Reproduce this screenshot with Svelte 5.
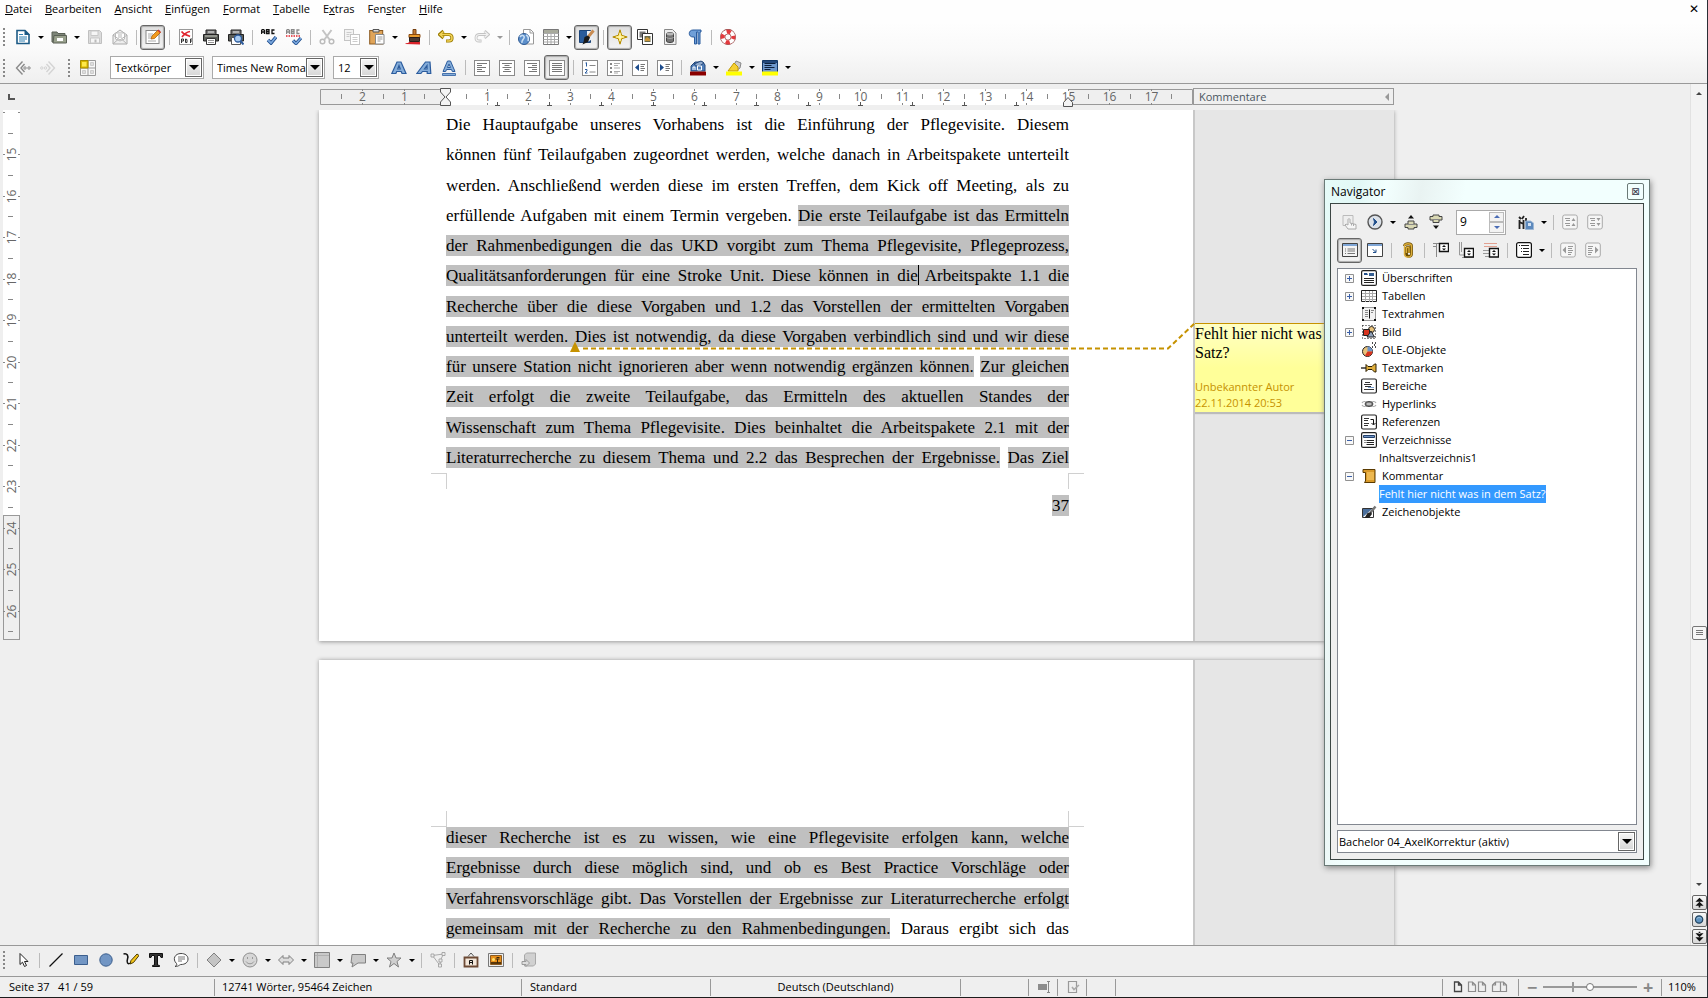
<script>
  const icons = {
    new: '<path d="M2 1.500h8l4 4v9H2z" fill="#fff" stroke="#1c5a85" stroke-width="1.600"/><path d="M9.500 1v5H15z" fill="#1c5a85"/><path d="M4 5.500h4M4 8h8M4 10h8M4 12h6" stroke="#2f7fb0"/>',
    open: '<path d="M1 3h5l1 1.500h7V13H1z" fill="#7d8578" stroke="#5a6055"/><path d="M3 6.500h12.500V14H2z" fill="#98a08c" stroke="#5a6055"/><path d="M6 9h6v3H6z" fill="#fff"/>',
    save: '<path d="M1.500 1.500h11l2 2v11h-13z" fill="#dcdcdc" stroke="#c0c0c0"/><path d="M4 2h7v4.500H4z" fill="#f6f6f6" stroke="#c8c8c8"/><path d="M3.500 9h9v5h-9z" fill="#f6f6f6" stroke="#c8c8c8"/><path d="M8.500 10.500v3" stroke="#bbb" stroke-width="2"/>',
    mail: '<path d="M1 6l7-5 7 5v9H1z" fill="#eee" stroke="#aaa"/><path d="M3.500 4h9v6l-4.500 2-4.500-2z" fill="#fff" stroke="#bbb"/><path d="M1 15l5.500-5M15 15l-5.500-5M1 6l7 5 7-5M6 6h4M6 8h4" fill="none" stroke="#b5b5b5"/>',
    edit: '<rect x="1" y="1.500" width="13" height="13" fill="#fff" stroke="#888"/><path d="M3 5h5M3 7h4M3 9h3M3 12h8" stroke="#aaa"/><path d="M6 10l1-3 6-6 2.500 2.500-6 6z" fill="#f29a1c" stroke="#a35400" stroke-width=".7"/><path d="M13 1l2.500 2.500" stroke="#c33" stroke-width="1.500"/>',
    pdf: '<rect x="1.500" y=".5" width="13" height="15" fill="#fff" stroke="#999"/><path d="M3.500 2.500c3 4 5 3 8.500 5M12 2.500C9 3 6 5 4 8" stroke="#e0242e" stroke-width="1.700" fill="none"/><path d="M3.500 14v-4h2v2h-2M7.500 10v3.500h1.500v-3zM12.500 14v-4h1.500M12 12h2" stroke="#333" fill="none"/>',
    print: '<path d="M3 1h10v5H3z" fill="#777" stroke="#222"/><path d="M5 3h6" stroke="#eee"/><path d="M.5 5.500h15V12H.5z" fill="#5c5f5a" stroke="#222"/><path d="M2 7h12" stroke="#c8cbc0"/><path d="M3.500 9.500h9v6h-9z" fill="#fff" stroke="#333"/><path d="M5 11.500h6M5 13.500h6" stroke="#999"/>',
    preview: '<path d="M3 1h10v5H3z" fill="#777" stroke="#222"/><path d="M5 3h6" stroke="#eee"/><path d="M.5 5.500h15V12H.5z" fill="#5c5f5a" stroke="#222"/><path d="M3.500 8.500h9v7h-9z" fill="#fff" stroke="#555"/><circle cx="10" cy="9.500" r="3.500" fill="#a9cbf0" stroke="#2d5b9c" stroke-width="1.300"/><path d="M12.500 12l3 3.500" stroke="#2d5b9c" stroke-width="2"/>',
    spell: '<path d="M.5 5V1.500l1-1h1l1 1V5M.5 3h3M5.500.5v4h2.500v-4zM5.500 2.500H8M13.500 1h-2.500v3.500h2.500" stroke="#111" fill="none" stroke-width="1.300"/><path d="M7 11l3 3 5-6" fill="none" stroke="#1d4c8c" stroke-width="3.500"/><path d="M7 11l3 3 5-6" fill="none" stroke="#7aa7dd" stroke-width="1.800"/>',
    autospell: '<path d="M.5 5V1.500l1-1h1l1 1V5M.5 3h3M5.500.5v4h2.500v-4zM5.500 2.500H8M13.500 1h-2.500v3.500h2.500" stroke="#888" fill="none" stroke-width="1.300"/><path d="M0 7h14" stroke="#e0242e" stroke-width="1.500" stroke-dasharray="1.500 1"/><path d="M7 11.500l3 3 5-5.500" fill="none" stroke="#1d4c8c" stroke-width="3.300"/><path d="M7 11.500l3 3 5-5.500" fill="none" stroke="#7aa7dd" stroke-width="1.600"/>',
    cut: '<path d="M3.500 1l7 9.500M12.500 1l-7 9.500" stroke="#c4c4c4" stroke-width="2"/><circle cx="3.500" cy="12.500" r="2.300" fill="none" stroke="#bbb" stroke-width="1.500"/><circle cx="12.500" cy="12.500" r="2.300" fill="none" stroke="#bbb" stroke-width="1.500"/>',
    copy: '<rect x=".5" y=".5" width="9" height="11" fill="#f3f3f3" stroke="#c4c4c4"/><path d="M2.500 3.500h5M2.500 5.500h3M2.500 7.500h3" stroke="#ccc"/><rect x="6.500" y="5.500" width="9" height="10" fill="#fff" stroke="#c4c4c4"/><path d="M8.500 8.500h5M8.500 10.500h5M8.500 12.500h5" stroke="#ccc"/>',
    paste: '<rect x=".7" y="1.500" width="13" height="13.500" fill="#e0a458" stroke="#8a5a20"/><path d="M4 3h6V.5H4z" fill="#ddd" stroke="#555"/><path d="M6.500 5.500H15V15H6.500z" fill="#fff" stroke="#888"/><path d="M8.500 8h5M8.500 10h5M8.500 12h3" stroke="#999"/>',
    brush: '<path d="M8 .5h3v5H8z" fill="#c57a34" stroke="#774010"/><path d="M4 5.500h11v3H4z" fill="#eb9b2c" stroke="#8a4a10"/><path d="M4.500 8.500h10v4h-10z" fill="#4a3a33" stroke="#2b1d18"/><path d="M0 15c2-2 3 0 4-2h11v2.500z" fill="#d9232b"/>',
    undo: '<path d="M5.500 2L1.500 5.500l4 3.500M2 5.500h9c4 .5 4 6.500 0 6.500H8" fill="none" stroke="#9a7b00" stroke-width="3.200"/><path d="M5.500 2.500L2 5.500l3.500 3M2 5.500h9c4 .5 4 6.500 0 6.500H8.500" fill="none" stroke="#f2d358" stroke-width="1.500"/>',
    redo: '<path d="M10.500 2l4 3.500-4 3.500M14 5.500H5c-4 .5-4 6.500 0 6.500h2.500" fill="none" stroke="#c4c4c4" stroke-width="2.800"/><path d="M10.500 2.500l3.500 3-3.500 3M14 5.500H5c-4 .5-4 6.500 0 6.500h2" fill="none" stroke="#f2f2f2" stroke-width="1.200"/>',
    web: '<path d="M5.500.5h7l3 3V15h-10z" fill="#fff" stroke="#999"/><path d="M12 .5v3.500h3.500" fill="none" stroke="#999"/><circle cx="6" cy="10" r="5.500" fill="#5c8fcb" stroke="#2f5a92"/><path d="M2 8c2-3 5-1 4 1s-3 3-2 5M8 6c2 1 3 3 2 6" stroke="#c9dff4" fill="none" stroke-width="1.600"/>',
    table: '<path d="M.5.500h15v15H.5z" fill="#fff" stroke="#777"/><path d="M1 1h14v3H1z" fill="#a8aa9c"/><path d="M.5 4.500h15M.5 7.500h15M.5 10.500h15M.5 13h15M4.500 4v11M8 4v11M11.500 4v11" stroke="#aaa"/>',
    draw: '<path d="M.5 1.500h11v12H.5z" fill="#2a5c9c" stroke="#1c4478"/><path d="M8 2h6v8L8 13z" fill="#e9eef5"/><path d="M14.500 1.500l-5 6" stroke="#c98c52" stroke-width="3"/><path d="M4.500 13l1-5 3.500-1.500 2 2-2 4.500-5.500 2.500z" fill="#1b1b1b"/>',
    star: '<path d="M8 .8l1.700 5.500L15.200 8l-5.500 1.700L8 15.200 6.300 9.700.8 8l5.500-1.700z" fill="#ffe452" stroke="#b28a00"/><path d="M8 4v8M4 8h8" stroke="#fffbd0"/>',
    gallery: '<path d="M.5.500h10v10H.5z" fill="#fff" stroke="#333"/><path d="M2.500 2.500h6v6h-6z" fill="#777"/><path d="M5.500 4.500h10v11h-10z" fill="#fff" stroke="#333"/><path d="M7.500 7h6v6h-6z" fill="#6b6a4a"/><path d="M8 10l2-2 3 2v2H8z" fill="#c8963a"/>',
    db: '<path d="M2.500.500h8l3.500 3.500v11.500H2.500z" fill="#eee" stroke="#888"/><path d="M4.500 5c0-2 7-2 7 0v7c0 2-7 2-7 0z" fill="#757575" stroke="#444"/><ellipse cx="8" cy="5" rx="3.500" ry="1.400" fill="#b8b8b8"/><path d="M4.500 8c0 2 7 2 7 0" stroke="#aaa" fill="none"/>',
    pilcrow: '<path d="M14 1H6C1 1 1 8 6 8h1.500v7h2V3h1.500v12h2V3h1z" fill="#6f9fd8" stroke="#2b5c9e"/>',
    help: '<circle cx="8" cy="8" r="5.300" fill="none" stroke="#8a2a2a" stroke-width="5.200"/><circle cx="8" cy="8" r="5.300" fill="none" stroke="#fff" stroke-width="4"/><circle cx="8" cy="8" r="5.300" fill="none" stroke="#e2393d" stroke-width="4" stroke-dasharray="4.160" stroke-dashoffset="2"/>',
    back: '<path d="M7.500 1.500L1.500 8l6 6.500M9.500 4L6 8l3.500 4" fill="none" stroke="#8a8a8a" stroke-width="1.400"/><circle cx="10" cy="8" r="1.200" fill="none" stroke="#888"/><circle cx="14" cy="8" r="1.200" fill="none" stroke="#888"/>',
    fwd: '<path d="M8.500 1.500l6 6.500-6 6.500M6.500 4L10 8l-3.500 4" fill="none" stroke="#d4d4d4" stroke-width="1.400"/><circle cx="5.500" cy="8" r="1.200" fill="none" stroke="#d4d4d4"/><circle cx="1.800" cy="8" r="1.200" fill="none" stroke="#d4d4d4"/>',
    styles: '<path d="M.5.500h15v15H.5z" fill="#f8f8f8" stroke="#999"/><path d="M2.500 10.500h3v3h-3zM10.500 2.500h3v3h-3zM10.500 10.500h3v3h-3z" fill="#ddd" stroke="#ccc"/><path d="M8 1v14M1 8h14" stroke="#999"/><path d="M.5.500H8V8H.5z" fill="#d9b800" stroke="#a98d00"/><path d="M2 2h4.500v4.500H2z" fill="#ffe94a"/>',
    bold: '<path d="M.8 13.500L6 2h4l5 11.500h-4l-.8-2H5.700l-.8 2zM6.700 9h2.600L8 5.500z" fill="#85add9" stroke="#2b5c9e" stroke-width="1.200"/>',
    italic: '<path d="M.8 13.500L9.500 2H14l.8 11.500h-3.600v-2H6.500l-1.600 2zM8.500 9h2.600l-.1-3.500z" fill="#85add9" stroke="#2b5c9e" stroke-width="1.200"/>',
    under: '<path d="M2 11.500L6.500 1h3L14 11.500h-2.700l-.8-2h-5l-.8 2zM6.500 7.500h3L8 4z" fill="#85add9" stroke="#2b5c9e"/><path d="M1.500 13.500h13v2h-13z" fill="#85add9" stroke="#2b5c9e" stroke-width=".8"/>',
    left: '<rect x=".5" y=".5" width="15" height="15" fill="#fff" stroke="#8a8a8a"/><path d="M3 3.500h10M3 5.500h5M3 7.500h9M3 9.500h5M3 11.500h8" stroke="#777"/>',
    center: '<rect x=".5" y=".5" width="15" height="15" fill="#fff" stroke="#8a8a8a"/><path d="M3 3.500h10M5.500 5.500h5M3.500 7.500h9M5.500 9.500h5M4 11.500h8" stroke="#777"/>',
    right: '<rect x=".5" y=".5" width="15" height="15" fill="#fff" stroke="#8a8a8a"/><path d="M3 3.500h10M8 5.500h5M4 7.500h9M8 9.500h5M5 11.500h8" stroke="#777"/>',
    justify: '<rect x=".5" y=".5" width="15" height="15" fill="#fff" stroke="#8a8a8a"/><path d="M3 3.500h10M3 5.500h10M3 7.500h10M3 9.500h10M3 11.500h10" stroke="#777"/>',
    numbers: '<rect x=".5" y=".5" width="15" height="15" fill="#fff" stroke="#8a8a8a"/><path d="M4.500 2.500v4M3.500 3h1M3 9.500h2v1.500l-2 2h2.500" stroke="#2b5c9e" fill="none"/><path d="M7.500 5.500h6M7.500 12h6" stroke="#888"/>',
    bullets: '<rect x=".5" y=".5" width="15" height="15" fill="#fff" stroke="#8a8a8a"/><path d="M3 4h2M3 8h2M3 12h2" stroke="#888" stroke-width="2"/><path d="M7 3.500h6M7 5.500h4M7 8h6M7 11.500h6M7 13h4" stroke="#aaa"/>',
    outdent: '<rect x=".5" y=".5" width="15" height="15" fill="#fff" stroke="#8a8a8a"/><path d="M7 4v7L3 7.500z" fill="#1d4c8c"/><path d="M8.500 4.500H13M8.500 6.500H12M8.500 8.500H13M8.500 10.500H12" stroke="#777"/>',
    indent: '<rect x=".5" y=".5" width="15" height="15" fill="#fff" stroke="#8a8a8a"/><path d="M3 4v7l4-3.500z" fill="#1d4c8c"/><path d="M8.500 4.500H13M8.500 6.500H12M8.500 8.500H13M8.500 10.500H12" stroke="#777"/>',
    fontcolor: '<path d="M1 11V6l4-4h8l2 3v6z" fill="#4f7db8" stroke="#24487a"/><path d="M4 4l7-3 3 2-6 4z" fill="#8fa9cc" stroke="#24487a"/><path d="M3 10V7h2v3M7.500 6h4v4h-4z" fill="none" stroke="#fff"/><path d="M0 11.500h16v4H0z" fill="#8b0000"/>',
    highlight: '<path d="M10 1l5 2-1 5-4 3-2-6z" fill="#ccc" stroke="#888"/><path d="M2 11l6-8 4 4v4z" fill="#f5d033" stroke="#c09a00"/><path d="M0 11.500h16v4H0z" fill="#ff0"/>',
    paracolor: '<path d="M.5.500h15v12H.5z" fill="#6f98cc" stroke="#133766"/><path d="M1 1h14v2H1z" fill="#24487a"/><path d="M2.500 3.500h11M2.500 5.500h7M2.500 7.500h10M2.500 9.500h6" stroke="#0c203d"/><path d="M0 11.500h16v4H0z" fill="#ff0"/>',
    pointer: '<path d="M5 1.500v11l2.500-2.300 2 4.300 2-1-2-4H13z" fill="#fff" stroke="#222"/>',
    line: '<path d="M1.500 14.500l13-13" stroke="#111" stroke-width="1.300"/>',
    rect: '<path d="M1.500 3.500h13v9h-13z" fill="#7296c4" stroke="#3c5f8e"/>',
    ellipse: '<circle cx="8" cy="8" r="6.200" fill="#7296c4" stroke="#3c5f8e"/>',
    freeform: '<path d="M.5 2c4-1 5 2 4 5s0 6 3 4" fill="none" stroke="#111" stroke-width="1.500"/><path d="M7 12l1-3.500L14 2l2 1.500-5.500 7z" fill="#f5c518" stroke="#4a3a00"/>',
    text: '<path d="M1.500 1.500h13v4h-1.500l-1-2h-2.500v9.500l2 .5v1h-7v-1l2-.5V3.500H4l-1 2H1.500z" fill="#333" stroke="#111"/>',
    callout: '<path d="M8 1.500c4 0 7 2 7 5.500s-3 5.500-7 5.500c-1.500 0-2 2-6 2 2-1 2-2 1.500-3C-1 7 2 1.500 8 1.500z" fill="#fff" stroke="#444"/><path d="M5 5h7M5 7h7M5 9h4" stroke="#777"/>',
    diamond: '<path d="M8 1l7 7-7 7-7-7z" fill="#c4c4c4" stroke="#808080"/>',
    smile: '<circle cx="8" cy="8" r="7" fill="#d6d6d6" stroke="#8f8f8f"/><path d="M5.500 5v2M10.500 5v2M4 9.500c2 3 6 3 8 0" fill="none" stroke="#999"/>',
    arrows: '<path d="M.5 8L5 3.500V6h6V3.500L15.500 8 11 12.500V10H5v2.500z" fill="#ddd" stroke="#808080"/>',
    flow: '<path d="M.5.500h15v15H.5z" fill="#c9c9c9" stroke="#808080"/><path d="M3.500 1v14M1 3.500h14" stroke="#b0b0b0"/>',
    speech: '<path d="M2 2.500h13.500V11H8l-6 4 1-4H1z" fill="#c9c9c9" stroke="#808080"/>',
    stars: '<path d="M8 1l2 5h5l-4 3.500 1.500 5.500L8 11.500 3.500 15 5 9.500 1 6h5z" fill="#d0d0d0" stroke="#808080"/>',
    points: '<path d="M2.500 3.500l11-1.500-3 6-.5 5.500z" fill="none" stroke="#aaa"/><path d="M1 2h3v3H1zM12 .5h3v3h-3zM9 7h3v3H9zM8.500 12h3v3h-3z" fill="#eee" stroke="#999" stroke-width=".8"/>',
    fontwork: '<path d="M5 4.500L8 1l3 3.500" stroke="#555" fill="none"/><path d="M1.500 5.500h13v9h-13z" fill="#f3e7da" stroke="#6d4a35" stroke-width="1.800"/><path d="M6.500 12.500V8.500h3v4M6.500 10.500h3" stroke="#111" fill="none"/>',
    image: '<path d="M.5 1.500h15v13H.5z" fill="#eee" stroke="#777"/><path d="M2.500 3.500h11v9h-11z" fill="#e88f1a" stroke="#8a5a20"/><path d="M3 10h10v2H3z" fill="#5a3608"/><path d="M9.500 11V7M7.500 7h4M8.500 5.500h3" stroke="#3a2508"/><circle cx="5.500" cy="7.500" r="1.500" fill="#ffe36b"/>',
    extrude: '<path d="M3.500 3l2-2h9v11l-2 2h-9z" fill="#d0d0d0" stroke="#a8a8a8"/><path d="M1 9.500h4V7.500l3.500 3.500L5 14.500v-2H1z" fill="#ddd" stroke="#999"/>',
    hand: '<path d="M1 1.500h10v10H1z" fill="#eee" stroke="#bbb"/><path d="M6 15l-3-4 1-1 2 1V5.500c0-1 2-1 2 0V9l6 1.500v4.500z" fill="#f6f6f6" stroke="#aaa"/><path d="M9.500 9.500v2M11.500 10v2" stroke="#aaa"/>',
    navigate: '<circle cx="8" cy="8" r="7" fill="#dbe1e8" stroke="#555" stroke-width="1.400"/><path d="M6.500 4.500L10 8l-3.500 3.500L7.500 8z" fill="#22508c" stroke="#22508c"/>',
    prev: '<path d="M8 1l3 3.500H5z" fill="#111"/><path d="M5 7h6v3h3v3.500h-3V15H5v-1.500H2V10h3z" fill="#d9d8b4" stroke="#444"/><path d="M5 10.500h6" stroke="#888"/>',
    next: '<path d="M8 15l-3-3.500h6z" fill="#111"/><path d="M5 1h6v1.500h3V6h-3v2.500H5V6H2V2.500h3z" fill="#d9d8b4" stroke="#444"/><path d="M5 5.500h6" stroke="#888"/>',
    drag: '<path d="M1.500 6v9M5.500 6v9M1 3l2 2M6 2L4 5M1.500 8l4 2M8 4v4" stroke="#222" stroke-width="1.800"/><path d="M7.500 7h5l3 2v6.500h-8z" fill="#5c89bd" stroke="#9db7d4"/><path d="M10 9h3v3h-3z" fill="#cfe0f2"/>',
    promote: '<rect x=".7" y="1" width="14.600" height="14" rx="2" fill="#f6f6f6" stroke="#aaa"/><path d="M3 4.500h5M4 6.500h4M3 9.500h5M4 11.500h4" stroke="#999"/><path d="M9.500 7l2-3 2 3zM9.500 12l2-3 2 3z" fill="#999"/>',
    demote: '<rect x=".7" y="1" width="14.600" height="14" rx="2" fill="#f6f6f6" stroke="#aaa"/><path d="M3 4.500h5M4 6.500h4M3 9.500h5M4 11.500h4" stroke="#999"/><path d="M9.500 4l2 3 2-3zM9.500 9l2 3 2-3z" fill="#999"/>',
    listbox: '<path d="M.5 1.500h15v13H.5z" fill="#f4f4f4" stroke="#444"/><path d="M1 2h14v2H1z" fill="#7fa6d6"/><path d="M3 7h1M3 9h1M3 11.500h1M5.500 7H13M5.500 9H13M5.500 11.500H13" stroke="#777"/>',
    content: '<path d="M.5 1.500h15v13H.5z" fill="#fff" stroke="#444"/><path d="M1 2h14v2H1z" fill="#7fa6d6"/><path d="M5.500 7l3 3M9 7.500v3H6" stroke="#22508c" fill="none"/>',
    clip: '<path d="M4.500 4c0-3 7-3 7 0v8c0 3-5 3-5 0V6c.5-1 2.500-1 2.500 0v5" fill="none" stroke="#6a4c00" stroke-width="2.800"/><path d="M4.500 12V4c0-3 7-3 7 0v8c0 4-7 4-7 0M6.500 11V6c.5-1 2.500-1 2.500 0v5" fill="none" stroke="#dcae3b" stroke-width="1.400"/>',
    header: '<path d="M0 1.500h16M3.500 2v13M0 4.500h3" stroke="#888"/><path d="M6.500 1.500h9v8h-9z" fill="#fff" stroke="#111" stroke-width="1.400"/><path d="M9 5l2-2 2 2zM9 6.500l2 2 2-2z" fill="#111"/>',
    footer: '<path d="M1.500 0v13H16M4 15.500h12M3.500 0v10" stroke="#999" fill="none"/><path d="M6.500 6.500h9v8.500h-9z" fill="#fff" stroke="#111" stroke-width="1.400"/><path d="M9 10l2-2 2 2zM9 11.500l2 2 2-2z" fill="#111"/>',
    anchor: '<path d="M1 1.500h13M1 4.500h13" stroke="#e2a090"/><path d="M0 8.500h6M0 11.500h6M2 14.500h14" stroke="#999"/><path d="M6.500 6.500h9v8.500h-9z" fill="#fff" stroke="#111" stroke-width="1.400"/><path d="M9 10l2-2 2 2zM9 11.500l2 2 2-2z" fill="#111"/>',
    levels: '<rect x=".6" y=".6" width="14.800" height="14.800" rx="2" fill="#fff" stroke="#111" stroke-width="1.200"/><path d="M3 3.500h1M5 3.500h8M5 6.500h1M7 6.500h6M5 9.500h1M7 9.500h6M7 12.500h6" stroke="#222"/>',
    lvup: '<rect x=".7" y="1" width="14.600" height="14" rx="2" fill="#f6f6f6" stroke="#aaa"/><path d="M6 4.500v7L2.500 8z" fill="#999"/><path d="M8 4.500h5M8 6.500h4M8 8.500h5M8 10.500h4M8 12.500h3" stroke="#999"/>',
    lvdown: '<rect x=".7" y="1" width="14.600" height="14" rx="2" fill="#f6f6f6" stroke="#aaa"/><path d="M10 4.500v7L13.500 8z" fill="#999"/><path d="M3 4.500h5M3 6.500h4M3 8.500h5M3 10.500h4M3 12.500h3" stroke="#999"/>',
    tHead: '<rect x=".6" y=".6" width="14.800" height="14.800" rx="1.500" fill="#fff" stroke="#222" stroke-width="1.200"/><path d="M3 3h3l1 2H3z" fill="#22508c"/><path d="M8 3h5v3H8z" fill="#355f93"/><path d="M3 8.500h10M3 10.500h10M3 12.500h10" stroke="#222"/>',
    tTable: '<path d="M.5 2.500h15v11H.5z" fill="#fff" stroke="#222"/><path d="M1 5.500h14M1 8.500h14M1 11.500h14M4.500 3v11M8.500 3v11M11.500 3v11" stroke="#aaa"/>',
    tFrame: '<path d="M1.500 1.500h13v13h-13z" fill="#f2f2f2" stroke="#999"/><path d="M1 1h2v2H1zM13 1h2v2h-2zM1 13h2v2H1zM13 13h2v2h-2z" fill="#111"/><path d="M4 4.500h3M4 6.500h3M4 8.500h3M4 10.500h3M10 4.500h3M10 6.500h2" stroke="#888"/><path d="M8.500 3.500v9" stroke="#111"/>',
    tImage: '<path d="M1.500 1.500h13v13h-13z" fill="none" stroke="#111" stroke-dasharray="1 2"/><circle cx="10.500" cy="5.500" r="3" fill="#e8c27a" stroke="#222"/><path d="M2.500 5.500h6v6h-6z" fill="#d8341f" stroke="#222"/><path d="M6 13l4-6 3.500 6z" fill="#8ea0b8" stroke="#222"/>',
    tOle: '<circle cx="6.500" cy="9.500" r="5" fill="#e8c27a" stroke="#222"/><path d="M6.500 9.500V4.500a5 5 0 0 1 5 5z" fill="#6f94c6"/><path d="M6.500 9.500h5a5 5 0 0 1-7.500 4z" fill="#d8341f"/><path d="M11 1h1M15 1h-1M13 3h1M11 5h1M15 5h-1" stroke="#111" stroke-width="1.400"/>',
    tMark: '<path d="M0 8h5" stroke="#111" stroke-width="1.300"/><path d="M5 4.500v7l2-2h4l2.500 2.500h1.500V4h-1.500L11 6.500H7z" fill="#dfae3c" stroke="#2a1d00"/>',
    tSection: '<rect x=".6" y="1" width="14.800" height="14" rx="1.500" fill="#fff" stroke="#222" stroke-width="1.200"/><path d="M4 4.500h5M3 6.500h8M4 8.500h6M3 11.500h10" stroke="#333"/><path d="M7 9.500h6" stroke="#7fa6d6"/>',
    tLink: '<path d="M1 7c1-2 4-2 5 0M1 9c1 2 4 2 5 0M10 7c1-2 4-2 5 0M10 9c1 2 4 2 5 0" fill="none" stroke="#aaa" stroke-width="1.200"/><ellipse cx="8" cy="8" rx="4" ry="2.500" fill="#888" stroke="#444"/><path d="M6 8h4" stroke="#eee"/>',
    tRef: '<rect x=".6" y="1" width="14.800" height="14" rx="1.500" fill="#fff" stroke="#222" stroke-width="1.200"/><path d="M3 4.500h5M3 6.500h4M3 9.500h5M3 11.500h4" stroke="#333"/><path d="M9.500 5.500h3v5M10.500 9l2 2 2-2" fill="none" stroke="#111"/>',
    tIndex: '<rect x=".6" y=".6" width="14.800" height="14.800" rx="1.500" fill="#fff" stroke="#222" stroke-width="1.200"/><path d="M2.500 3.500h11v2h-11z" fill="#6f94c6" stroke="#22406b"/><path d="M3.500 8.500h1M3.500 10.500h1M5.500 8.500H13M5.500 10.500H13M5.500 12.500H13" stroke="#222"/>',
    tNote: '<path d="M2 1.500h12v13H3.500l1-1.500V4.500H2z" fill="#d99a2a" stroke="#5a3a00"/><path d="M6 4h7v8H6z" fill="#edb850"/>',
    tDraw: '<path d="M1.500 4.500h11v9h-11z" fill="#fff" stroke="#333"/><path d="M2 5h9l-9 8z" fill="#4a6f9c"/><path d="M14.500 2.500l-5 6" stroke="#777" stroke-width="2.500"/><path d="M3.500 14l3-5 3.500-1 1 2-3 4z" fill="#222"/>'
  };

  const b = (icon, label, on = false) => ({ t: 'b', icon, label, on });
  const d = (label, dim = false) => ({ t: 'd', label, dim });
  const s = { t: 's' };

  const menus = [['', 'D', 'atei'], ['', 'B', 'earbeiten'], ['', 'A', 'nsicht'], ['', 'E', 'infügen'], ['', 'F', 'ormat'], ['', 'T', 'abelle'], ['E', 'x', 'tras'], ['Fen', 's', 'ter'], ['', 'H', 'ilfe']];

  const standard = [
    b('new', 'Neu'), d('Neu Auswahl'), b('open', 'Öffnen'), d('Zuletzt benutzt'), b('save', 'Speichern'), b('mail', 'E-Mail'), s,
    b('edit', 'Bearbeiten', true), s, b('pdf', 'PDF-Export'), b('print', 'Drucken'), b('preview', 'Seitenansicht'), s,
    b('spell', 'Rechtschreibung'), b('autospell', 'Automatische Prüfung'), s, b('cut', 'Ausschneiden'), b('copy', 'Kopieren'),
    b('paste', 'Einfügen'), d('Einfügen Auswahl'), b('brush', 'Format übertragen'), s, b('undo', 'Rückgängig'), d('Rückgängig Liste'),
    b('redo', 'Wiederholen'), d('Wiederholen Liste', true), s, b('web', 'Hyperlink'), b('table', 'Tabelle'), d('Tabelle Auswahl'),
    b('draw', 'Zeichenfunktionen', true), s, b('star', 'Navigator', true), b('gallery', 'Gallery'), b('db', 'Datenquellen'),
    b('pilcrow', 'Steuerzeichen'), s, b('help', 'Hilfe')
  ];
  const formatting = [
    b('bold', 'Fett'), b('italic', 'Kursiv'), b('under', 'Unterstrichen'), s, b('left', 'Links'), b('center', 'Zentriert'),
    b('right', 'Rechts'), b('justify', 'Blocksatz', true), s, b('numbers', 'Nummerierung'), b('bullets', 'Aufzählung'),
    b('outdent', 'Einzug verkleinern'), b('indent', 'Einzug vergrößern'), s, b('fontcolor', 'Schriftfarbe'), d('Schriftfarbe Auswahl'),
    b('highlight', 'Hervorheben'), d('Hervorheben Auswahl'), b('paracolor', 'Absatzhintergrund'), d('Hintergrund Auswahl')
  ];
  const drawing = [
    b('pointer', 'Auswahl'), s, b('line', 'Linie'), b('rect', 'Rechteck'), b('ellipse', 'Ellipse'), b('freeform', 'Freihandlinie'),
    b('text', 'Text'), b('callout', 'Legende'), s, b('diamond', 'Standardformen'), d('Standardformen Auswahl'), b('smile', 'Symbolformen'),
    d('Symbolformen Auswahl'), b('arrows', 'Blockpfeile'), d('Blockpfeile Auswahl'), b('flow', 'Flussdiagramme'), d('Flussdiagramme Auswahl'),
    b('speech', 'Legenden'), d('Legenden Auswahl'), b('stars', 'Sterne'), d('Sterne Auswahl'), s, b('points', 'Punkte'), s,
    b('fontwork', 'Fontwork'), b('image', 'Bild aus Datei'), s, b('extrude', 'Extrusion')
  ];
  const nav1a = [b('hand', 'Umschalten'), b('navigate', 'Navigation'), d('Navigation Auswahl'), b('prev', 'Zurück'), b('next', 'Vorwärts')];
  const nav1b = [b('drag', 'Ziehmodus'), d('Ziehmodus Auswahl'), s, b('promote', 'Kapitel hoch'), b('demote', 'Kapitel runter')];
  const nav2 = [
    b('listbox', 'Auswahlbox', true), b('content', 'Inhaltsansicht'), s, b('clip', 'Merker setzen'), s, b('header', 'Kopfzeile'),
    b('footer', 'Fußzeile'), b('anchor', 'Anker'), s, b('levels', 'Ebenen'), d('Ebenen Auswahl'), s, b('lvup', 'Ebene hoch'), b('lvdown', 'Ebene runter')
  ];

  const tree = [
    { x: '+', icon: 'tHead', label: 'Überschriften' }, { x: '+', icon: 'tTable', label: 'Tabellen' }, { icon: 'tFrame', label: 'Textrahmen' },
    { x: '+', icon: 'tImage', label: 'Bild' }, { icon: 'tOle', label: 'OLE-Objekte' }, { icon: 'tMark', label: 'Textmarken' },
    { icon: 'tSection', label: 'Bereiche' }, { icon: 'tLink', label: 'Hyperlinks' }, { icon: 'tRef', label: 'Referenzen' },
    { x: '-', icon: 'tIndex', label: 'Verzeichnisse' }, { child: true, label: 'Inhaltsverzeichnis1' },
    { x: '-', icon: 'tNote', label: 'Kommentar' }, { child: true, label: 'Fehlt hier nicht was in dem Satz?', sel: true },
    { icon: 'tDraw', label: 'Zeichenobjekte' }
  ];

  // Each line is a list of runs: [text, shaded]; a null run is the text cursor.
  const page37 = [
    [['Die Hauptaufgabe unseres Vorhabens ist die Einführung der Pflegevisite. Diesem', 0]],
    [['können fünf Teilaufgaben zugeordnet werden, welche danach in Arbeitspakete unterteilt', 0]],
    [['werden. Anschließend werden diese im ersten Treffen, dem Kick off Meeting, als zu', 0]],
    [['erfüllende Aufgaben mit einem Termin vergeben. ', 0], ['Die erste Teilaufgabe ist das Ermitteln', 1]],
    [['der Rahmenbedigungen die das UKD vorgibt zum Thema Pflegevisite, Pflegeprozess,', 1]],
    [['Qualitätsanforderungen für eine Stroke Unit. Diese können in die', 1], null, [' Arbeitspakte 1.1 die', 1]],
    [['Recherche über die diese Vorgaben und 1.2 das Vorstellen der ermittelten Vorgaben', 1]],
    [['unterteilt werden. Dies ist notwendig, da diese Vorgaben verbindlich sind und wir diese', 1]],
    [['für unsere Station nicht ignorieren aber wenn notwendig ergänzen können.', 1], [' ', 0], ['Zur gleichen', 1]],
    [['Zeit erfolgt die zweite Teilaufgabe, das Ermitteln des aktuellen Standes der', 1]],
    [['Wissenschaft zum Thema Pflegevisite. Dies beinhaltet die Arbeitspakete 2.1 mit der', 1]],
    [['Literaturrecherche zu diesem Thema und 2.2 das Besprechen der Ergebnisse.', 1], [' ', 0], ['Das Ziel', 1]]
  ];
  const page38 = [
    [['dieser Recherche ist es zu wissen, wie eine Pflegevisite erfolgen kann, welche', 1]],
    [['Ergebnisse durch diese möglich sind, und ob es Best Practice Vorschläge oder', 1]],
    [['Verfahrensvorschläge gibt. Das Vorstellen der Ergebnisse zur Literaturrecherche erfolgt', 1]],
    [['gemeinsam mit der Recherche zu den Rahmenbedingungen.', 1], [' Daraus ergibt sich das', 0]]
  ];

  const cm = 41.5;
  const hx = (n) => Math.round(126 + n * cm) + 0.5;
  const vy = (n) => Math.round(44 + (n - 15) * cm) + 0.5;
  const hNums = Array.from({ length: 20 }, (_, i) => i - 2);
  const hHalves = Array.from({ length: 21 }, (_, i) => i - 2.5);
  const tabs = Array.from({ length: 11 }, (_, i) => (i + 1) * 1.25);
  const vNums = Array.from({ length: 12 }, (_, i) => i + 15);
  const vHalves = Array.from({ length: 13 }, (_, i) => i + 14.5);

  let jump = $state(9);
  let zoom = $state(50);
</script>

{#snippet icon(name)}
  <svg class="ico" viewBox="0 0 16 16" aria-hidden="true">{@html icons[name]}</svg>
{/snippet}

{#snippet tools(items)}
  {#each items as it}
    {#if it.t === 'b'}
      <button class="tool" class:on={it.on} aria-label={it.label}>{@render icon(it.icon)}</button>
    {:else if it.t === 'd'}
      <button class="drop" class:dim={it.dim} aria-label={it.label}></button>
    {:else}
      <span class="sep"></span>
    {/if}
  {/each}
{/snippet}

{#snippet lines(rows)}
  {#each rows as row}
    <p class="line">{#each row as run}{#if run === null}<i class="caret"></i>{:else}<span class:shade={run[1]}>{run[0]}</span>{/if}{/each}</p>
  {/each}
{/snippet}

<div class="app">
  <nav class="menubar">
    {#each menus as m}
      <button>{m[0]}<u>{m[1]}</u>{m[2]}</button>
    {/each}
    <button class="closedoc" aria-label="Dokument schließen">✕</button>
  </nav>

  <div class="bar">
    <span class="grip"></span>
    {@render tools(standard)}
  </div>
  <div class="bar second">
    <span class="grip"></span>
    {@render tools([b('back', 'Zurück'), b('fwd', 'Vorwärts')])}
    <span class="grip mid"></span>
    {@render tools([b('styles', 'Formatvorlagen')])}
    <span class="combo style"><select aria-label="Absatzvorlage"><option>Textkörper</option></select><span class="arrow"></span></span>
    <span class="combo font"><select aria-label="Schriftart"><option>Times New Roman</option></select><span class="arrow"></span></span>
    <span class="combo size"><select aria-label="Schriftgröße"><option>12</option></select><span class="arrow"></span></span>
    {@render tools(formatting)}
  </div>

  <div class="work">
    <div class="vcol">
      <div class="corner"><i></i></div>
      <svg class="vruler" width="17" height="530" viewBox="0 0 17 530">
        <rect width="17" height="530" fill="#fff" />
        <rect x=".5" y="405.5" width="16" height="124" fill="#efefef" stroke="#999" />
        <path d="M0 2.500h2M15 2.500h2" stroke="#888" />
        {#each vNums as n}
          <path d="M0 {vy(n)}h2M15 {vy(n)}h2" stroke="#888" />
          <text transform="translate(13 {vy(n)}) rotate(-90)" text-anchor="middle">{n}</text>
        {/each}
        {#each vHalves as n}<path d="M5 {vy(n)}h5" stroke="#888" />{/each}
      </svg>
    </div>

    <main class="doc">
      <div class="sheet rulerrow">
        <svg class="hruler" width="874" height="20" viewBox="0 0 874 20">
          <rect x="126" y="1" width="624" height="16" fill="#fff" />
          <path d="M126 1.500H1.500v15H126M750 1.500h123.500v15H750" fill="#efefef" stroke="#999" />
          {#each hNums as n}
            {#if n !== 0}
              <path d="M{hx(n)} 1v2M{hx(n)} 15v2" stroke="#888" />
              <text x={hx(n)} y="13" text-anchor="middle">{Math.abs(n)}</text>
            {/if}
          {/each}
          {#each hHalves as n}<path d="M{hx(n)} 6v5" stroke="#888" />{/each}
          {#each tabs as n}<path d="M{hx(n)} 14v3M{hx(n) - 2.5} 17.500h5" stroke="#555" />{/each}
          <path d="M121.500.500h10v3.500l-4.500 5 4.500 5v3.500h-10v-3.500l4.500-5-4.500-5z" fill="#f4f4f4" stroke="#555" />
          <path d="M744.500 18.500v-4l4.500-5 4.500 5v4z" fill="#f4f4f4" stroke="#555" />
        </svg>
        <button class="commenthead">Kommentare<i></i></button>
      </div>

      <div class="view">
        <section class="sheet first">
          <div class="paper">
            <div class="body b12">{@render lines(page37)}</div>
            <div class="marks down"><i></i><i></i></div>
            <div class="foot"><span class="shade">37</span></div>
          </div>
          <aside class="margin">
            <article class="note">
              <p>Fehlt hier nicht was in dem Satz?</p>
              <footer>Unbekannter Autor<br />22.11.2014 20:53</footer>
            </article>
          </aside>
          <svg class="link" width="640" height="34" viewBox="0 0 640 34" aria-hidden="true">
            <path d="M13 26.500H598L625 1" fill="none" stroke="#c69200" stroke-width="2" stroke-dasharray="5 3" />
            <path d="M0 30L5 19.500 10 30z" fill="#c69200" />
          </svg>
        </section>
        <section class="sheet next">
          <div class="paper">
            <div class="marks up"><i></i><i></i></div>
            <div class="body b4">{@render lines(page38)}</div>
          </div>
          <aside class="margin"></aside>
        </section>
      </div>
    </main>

    <div class="scroll">
      <button class="tri up" aria-label="Nach oben"></button>
      <div class="track"><span class="thumb"><i></i></span></div>
      <button class="tri down" aria-label="Nach unten"></button>
      <button class="sbtn" aria-label="Vorherige Seite"><svg viewBox="0 0 16 16"><path d="M8 2l5 5H3zM8 7l5 5H3zM7 11h2v3H7z" fill="#111" /></svg></button>
      <button class="sbtn" aria-label="Navigation"><svg viewBox="0 0 16 16"><circle cx="7.500" cy="8" r="4.500" fill="#5f93c0" stroke="#23445f" stroke-width="1.500" /><path d="M4.500 7c2-2 4-2 6 0" stroke="#a9c9e2" fill="none" /></svg></button>
      <button class="sbtn" aria-label="Nächste Seite"><svg viewBox="0 0 16 16"><path d="M8 14l5-5H3zM8 9l5-5H3zM7 2h2v3H7z" fill="#111" /></svg></button>
    </div>
  </div>

  <div class="bar drawbar">
    <span class="grip"></span>
    {@render tools(drawing)}
  </div>

  <footer class="status">
    <span class="c pages">Seite 37 &nbsp; 41 / 59</span>
    <span class="c words">12741 Wörter, 95464 Zeichen</span>
    <span class="c tpl">Standard</span>
    <span class="c lang">Deutsch (Deutschland)</span>
    <span class="c gap"></span>
    <span class="c ic"><svg width="14" height="12" viewBox="0 0 14 12"><path d="M0 3h9v6H0z" fill="#8c8c8c" /><path d="M9 .5h3M9 11.500h3M10.500 1v10" stroke="#888" /></svg></span>
    <span class="c ic"><svg width="13" height="12" viewBox="0 0 13 12"><path d="M1.500.5h8v11h-8z" fill="none" stroke="#999" stroke-width="1.200" /><path d="M5 6l2 2.500L12 4" fill="none" stroke="#aaa" stroke-width="1.600" /></svg></span>
    <span class="c ic"></span>
    <span class="c fill"></span>
    <span class="c views">
      <svg width="56" height="12" viewBox="0 0 56 12" fill="none"><path d="M1.500 1h4l3 3v6.500h-7zM5.500 1v3h3" stroke="#444" stroke-width="1.300" /><path d="M15.500 1h4l3 3v6.500h-7zM19.500 1v3h3M25.500 1h4l3 3v6.500h-7zM29.500 1v3h3M47.500 10.500V1h3l3 3v6.500h-14V4l3-3h5M42.500 1v3h-3M50.500 1v3h3" stroke="#8c8c8c" stroke-width="1.200" /></svg>
    </span>
    <span class="c zoomer">
      <button aria-label="Verkleinern">−</button>
      <input type="range" min="0" max="100" bind:value={zoom} aria-label="Maßstab" />
      <button aria-label="Vergrößern">+</button>
    </span>
    <span class="c pct">110%</span>
  </footer>

  <section class="navigator" aria-label="Navigator">
    <header><h2>Navigator</h2><button aria-label="Schließen">⊠</button></header>
    <div class="inner">
      <div class="navrow">
        {@render tools(nav1a)}
        <span class="spin">
          <input type="text" inputmode="numeric" bind:value={jump} aria-label="Seite" />
          <span class="updown"><button aria-label="Mehr"><i class="u"></i></button><button aria-label="Weniger"><i class="d"></i></button></span>
        </span>
        {@render tools(nav1b)}
      </div>
      <div class="navrow">{@render tools(nav2)}</div>
      <ul class="tree">
        {#each tree as n}
          <li class:child={n.child}>
            {#if !n.child}
              <span class="exp">{#if n.x}<svg viewBox="0 0 9 9"><path d="M.5.5h8v8h-8z" fill="#f8f8f8" stroke="#919191" /><path d={n.x === '+' ? 'M2 4.500h5M4.500 2v5' : 'M2 4.500h5'} stroke="#3a5fa8" /></svg>{/if}</span>
              {@render icon(n.icon)}
            {/if}
            <span class="lbl" class:sel={n.sel}>{n.label}</span>
          </li>
        {/each}
      </ul>
      <span class="combo docs"><select aria-label="Dokument"><option>Bachelor 04_AxelKorrektur (aktiv)</option></select><span class="arrow"></span></span>
    </div>
  </section>
</div>

<style>
  :global(body) { margin: 0; background: #efefef; }
  .app, .app :global(*) { box-sizing: border-box; }
  .app {
    position: relative; display: flex; flex-direction: column; height: 100vh; overflow: hidden;
    border-right: 1px solid #2a2f36; background: #efefef;
    font: 11px/16px "Open Sans", "Noto Sans", sans-serif; color: #000;
  }
  button, select, input { font: inherit; color: inherit; margin: 0; padding: 0; border: 0; background: none; border-radius: 0; }
  p, h2, ul { margin: 0; padding: 0; font: inherit; }
  .menubar { display: flex; flex: none; height: 22px; align-items: flex-start; padding: 1px 8px 0 0; background: #fefefe; }
  .menubar button { padding: 0 0 0 5px; margin-right: 8px; }
  .menubar .closedoc { margin: 0 0 0 auto; font-size: 12px; }
  .bar { display: flex; flex: none; align-items: center; height: 30px; background: linear-gradient(#fefefe, #f9f9f9); }
  .bar.second { height: 32px; border-bottom: 1px solid #999; background: linear-gradient(#f9f9f9, #efefef); }
  .bar.drawbar { height: 31px; padding-bottom: 2px; border-top: 1px solid #999; background: #efefef; }
  .grip { flex: none; width: 2px; height: 18px; margin: 0 5px 0 3px; background: repeating-linear-gradient(#888 0 2px, transparent 2px 4px); }
  .grip.mid { margin: 0 5px 0 8px; }
  .tool { flex: none; display: grid; place-items: center; width: 25px; height: 25px; border: 1px solid transparent; border-radius: 3px; }
  .tool.on { border-color: #666; background: linear-gradient(#dedede, #f4f4f4); box-shadow: inset 0 0 1px 1px #aaa; }
  .ico { display: block; flex: none; width: 16px; height: 16px; }
  .drop { flex: none; width: 11px; height: 24px; display: grid; place-items: center; }
  .drop::before, .arrow::before { content: ""; border: 3px solid transparent; border-top-color: #000; border-bottom: 0; }
  .drop.dim::before { border-top-color: #999; }
  .sep { flex: none; width: 1px; height: 15px; margin: 0 3px 0 4px; background: #bbb; }
  .combo { position: relative; display: flex; flex: none; height: 23px; border: 1px solid #aaa; background: #fff; }
  .combo select { appearance: none; flex: 1; width: 100%; padding: 0 18px 0 4px; overflow: hidden; white-space: nowrap; }
  .arrow { position: absolute; top: 1px; right: 1px; bottom: 1px; width: 17px; display: grid; place-items: center; border: 1px solid #666; background: linear-gradient(#f6f6f6, #d6d6d6); box-shadow: inset 0 0 0 1px #fff; pointer-events: none; }
  .arrow::before { border-width: 5px 5px 0; }
  .combo.style { width: 94px; margin: 0 8px 0 10px; }
  .combo.font { width: 113px; margin-right: 8px; }
  .combo.size { width: 46px; margin-right: 7px; }

  .work { display: flex; flex: 1; min-height: 0; }
  .vcol { flex: none; width: 23px; padding-left: 3px; overflow: hidden; }
  .corner { height: 26px; padding: 10px 0 0 5px; }
  .corner i { display: block; width: 7px; height: 6px; border: solid #555; border-width: 0 0 2px 2px; }
  svg text { font: 12px "Open Sans", "Noto Sans", sans-serif; fill: #666; }
  .vruler, .hruler { display: block; flex: none; }
  .doc { flex: 1; min-width: 0; display: flex; flex-direction: column; }
  .sheet { position: relative; display: flex; width: 1075px; margin: 0 auto; flex: none; }
  .rulerrow { height: 26px; padding-top: 4px; }
  .commenthead { flex: 1; height: 17px; display: flex; justify-content: space-between; align-items: center; padding: 0 4px 0 5px; border: 1px solid #999; color: #4a5560; line-height: 14px; }
  .commenthead i { border: 4px solid transparent; border-right-color: #999; border-left: 0; }
  .view { flex: 1; min-height: 0; overflow: hidden; }
  .sheet.first { height: 531px; box-shadow: 0 1px 4px #999; margin-bottom: 19px; }
  .sheet.next { height: 600px; box-shadow: 0 0 4px #999; }
  .paper { width: 874px; padding: 0 124px 0 127px; background: #fff; }
  .margin { flex: 1; border-left: 2px solid #c8c8c8; background: #e6e6e6; }
  .first .paper { padding-top: 4px; }
  .body { display: flex; flex-direction: column; justify-content: space-between; }
  .b12 { height: 354px; }
  .b4 { height: 112px; }
  .line { height: 21px; font: 17px/21px "Liberation Serif", "Times New Roman", serif; text-align: justify; text-align-last: justify; white-space: nowrap; }
  .shade { background: #c0c0c0; padding: 1px 0; }
  .caret { position: relative; z-index: 1; display: inline-block; width: 1px; height: 20px; margin-right: -1px; vertical-align: -4px; background: #000; }
  .marks { display: flex; justify-content: space-between; margin: 0 -15px; }
  .marks i { width: 16px; height: 16px; border: 0 solid #d0d0d0; }
  .marks.down { margin-top: 5px; }
  .marks.down i { border-top-width: 1px; }
  .marks.up i { border-bottom-width: 1px; }
  .marks i:first-child { border-right-width: 1px; }
  .marks i:last-child { border-left-width: 1px; }
  .marks.up { padding-top: 151px; }
  .foot { margin-top: 6px; text-align: right; font: 17px/21px "Liberation Serif", "Times New Roman", serif; }
  .note { margin-top: 213px; height: 89px; border-top: 1px solid #c69200; background: linear-gradient(#ffffc4, #ffff99 50%); box-shadow: 0 2px 1px #bbb; }
  .note p { font: 16px/19px "Liberation Serif", "Times New Roman", serif; }
  .note footer { margin-top: 17px; color: #c69200; }
  .link { position: absolute; left: 251px; top: 212px; }

  .scroll { flex: none; width: 17px; display: flex; flex-direction: column; align-items: center; border-left: 1px solid #e2e2e2; background: #f3f3f3; padding-bottom: 1px; }
  .tri { flex: none; width: 15px; height: 18px; display: grid; place-items: center; }
  .tri::before { content: ""; border: 3px solid transparent; }
  .tri.up::before { border-bottom-color: #444; border-top: 0; }
  .tri.down::before { border-top-color: #444; border-bottom: 0; }
  .track { flex: 1; width: 15px; padding-top: 524px; }
  .thumb { display: block; height: 14px; border: 1px solid #777; border-radius: 2px; background: #f5f5f5; padding: 3px; }
  .thumb i { display: block; height: 6px; background: repeating-linear-gradient(#777 0 1px, transparent 1px 2px); }
  .sbtn { flex: none; width: 15px; height: 15px; margin-top: 2px; border: 1px solid #666; border-radius: 2px; background: linear-gradient(#f8f8f8, #d8d8d8); }
  .sbtn svg { display: block; width: 13px; height: 13px; }

  .status { display: flex; flex: none; height: 22px; border-top: 1px solid #999; border-bottom: 1px solid #1c1c1c; align-items: center; }
  .c { flex: none; display: flex; align-items: center; height: 17px; padding-left: 7px; border-left: 1px solid #999; white-space: nowrap; }
  .c.pages { width: 214px; padding-left: 9px; border: 0; }
  .c.words { width: 307px; }
  .c.tpl { width: 189px; padding-left: 8px; }
  .c.lang { width: 250px; justify-content: center; padding: 0; }
  .c.gap { width: 68px; }
  .c.ic { width: 29px; padding-left: 9px; }
  .c.fill { flex: 1; }
  .c.views { width: 76px; padding-left: 10px; }
  .c.zoomer { width: 143px; padding: 0 8px; gap: 6px; color: #888; }
  .zoomer button { width: 10px; font: bold 18px/16px "Open Sans", sans-serif; }
  .zoomer input { appearance: none; flex: 1; min-width: 0; height: 12px; background: linear-gradient(#999, #999) 32% 50% / 2px 10px no-repeat, linear-gradient(#999, #999) 0 50% / 100% 2px no-repeat; }
  .zoomer input::-webkit-slider-thumb { appearance: none; width: 8px; height: 8px; border: 1px solid #777; border-radius: 50%; background: #fff; }
  .c.pct { width: 46px; padding-left: 6px; }

  .navigator { position: absolute; top: 179px; right: 57px; width: 326px; height: 687px; display: flex; flex-direction: column; padding: 0 5px 5px; border: 1px solid #6b7a77; background: linear-gradient(100deg, #e6fbf8, #e2f8f6 8%, #f2fffe 14%, #e9f3f2 22%, #f2fffe 32%, #f2fffe); box-shadow: 1px 2px 6px #888; }
  .navigator header { display: flex; flex: none; height: 23px; align-items: center; padding-left: 1px; }
  .navigator h2 { flex: 1; font-size: 12px; }
  .navigator header button { width: 17px; height: 17px; border: 1px solid #6b7a77; border-radius: 2px; font: 10px/12px "DejaVu Sans", sans-serif; color: #334; }
  .inner { flex: 1; min-height: 0; display: flex; flex-direction: column; padding: 4px 6px 6px; border: 1px solid #3c4644; background: #efefef; }
  .navrow { display: flex; flex: none; align-items: center; height: 28px; }
  .spin { display: flex; flex: none; width: 50px; height: 25px; margin: 0 7px 0 8px; padding: 1px; border: 1px solid #aaa; background: #fff; }
  .spin input { flex: 1; min-width: 0; padding-left: 2px; font-size: 12px; }
  .updown { display: flex; flex-direction: column; width: 15px; }
  .updown button { flex: 1; display: grid; place-items: center; border: 1px solid #bbb; background: #f3f3f3; }
  .updown i { border: 3px solid transparent; }
  .updown .u { border-bottom-color: #4a6cb5; border-top: 0; }
  .updown .d { border-top-color: #4a6cb5; border-bottom: 0; }
  .tree { flex: 1; min-height: 0; margin-top: 4px; list-style: none; border: 1px solid #828790; background: #fff; }
  .tree li { display: flex; align-items: center; height: 18px; padding-left: 7px; }
  .tree li.child { padding-left: 41px; }
  .exp { width: 9px; margin-right: 7px; }
  .exp svg { display: block; width: 9px; height: 9px; }
  .ico + .lbl { margin-left: 5px; }
  .lbl { line-height: 18px; }
  .lbl.sel { background: #3399ff; color: #fff; }
  .combo.docs { margin-top: 5px; border-color: #828790; }
  .combo.docs select { padding-left: 1px; }
</style>
